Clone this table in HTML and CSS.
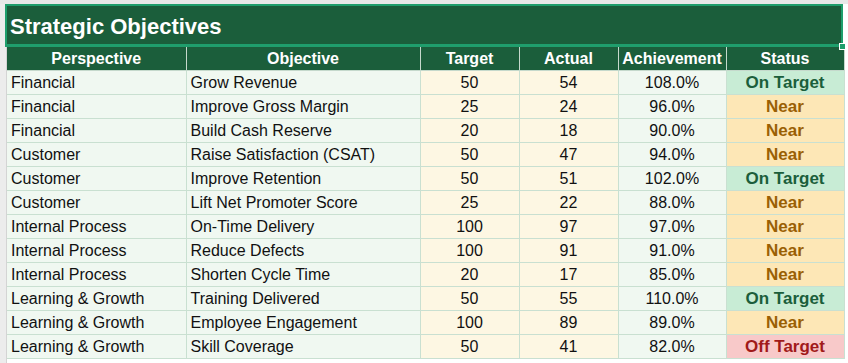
FILE: index.html
```html
<!DOCTYPE html>
<html>
<head>
<meta charset="utf-8">
<link rel="stylesheet" href="styles.css">
</head>
<body>
<div class="topbar"></div>
<div class="sheet">
  <div class="gutter"></div>
  <div class="grid">
    <div class="title">Strategic Objectives</div>
    <table class="tbl">
      <colgroup>
        <col class="c1"><col class="c2"><col class="c3"><col class="c4"><col class="c5"><col class="c6">
      </colgroup>
      <thead>
        <tr><th>Perspective</th><th>Objective</th><th>Target</th><th>Actual</th><th>Achievement</th><th>Status</th></tr>
      </thead>
      <tbody>
        <tr><td class="txt">Financial</td><td class="txt">Grow Revenue</td><td class="num">50</td><td class="num">54</td><td class="pct">108.0%</td><td class="st on">On Target</td></tr>
        <tr><td class="txt">Financial</td><td class="txt">Improve Gross Margin</td><td class="num">25</td><td class="num">24</td><td class="pct">96.0%</td><td class="st near">Near</td></tr>
        <tr><td class="txt">Financial</td><td class="txt">Build Cash Reserve</td><td class="num">20</td><td class="num">18</td><td class="pct">90.0%</td><td class="st near">Near</td></tr>
        <tr><td class="txt">Customer</td><td class="txt">Raise Satisfaction (CSAT)</td><td class="num">50</td><td class="num">47</td><td class="pct">94.0%</td><td class="st near">Near</td></tr>
        <tr><td class="txt">Customer</td><td class="txt">Improve Retention</td><td class="num">50</td><td class="num">51</td><td class="pct">102.0%</td><td class="st on">On Target</td></tr>
        <tr><td class="txt">Customer</td><td class="txt">Lift Net Promoter Score</td><td class="num">25</td><td class="num">22</td><td class="pct">88.0%</td><td class="st near">Near</td></tr>
        <tr><td class="txt">Internal Process</td><td class="txt">On-Time Delivery</td><td class="num">100</td><td class="num">97</td><td class="pct">97.0%</td><td class="st near">Near</td></tr>
        <tr><td class="txt">Internal Process</td><td class="txt">Reduce Defects</td><td class="num">100</td><td class="num">91</td><td class="pct">91.0%</td><td class="st near">Near</td></tr>
        <tr><td class="txt">Internal Process</td><td class="txt">Shorten Cycle Time</td><td class="num">20</td><td class="num">17</td><td class="pct">85.0%</td><td class="st near">Near</td></tr>
        <tr><td class="txt">Learning &amp; Growth</td><td class="txt">Training Delivered</td><td class="num">50</td><td class="num">55</td><td class="pct">110.0%</td><td class="st on">On Target</td></tr>
        <tr><td class="txt">Learning &amp; Growth</td><td class="txt">Employee Engagement</td><td class="num">100</td><td class="num">89</td><td class="pct">89.0%</td><td class="st near">Near</td></tr>
        <tr><td class="txt">Learning &amp; Growth</td><td class="txt">Skill Coverage</td><td class="num">50</td><td class="num">41</td><td class="pct">82.0%</td><td class="st off">Off Target</td></tr>
      </tbody>
    </table>
    <div class="selection"><span class="handle"></span></div>
  </div>
</div>
</body>
</html>
```

FILE: styles.css
```css
html, body {
  margin: 0;
  padding: 0;
  background: #ffffff;
  font-family: "Liberation Sans", Arial, sans-serif;
  overflow: hidden;
}

.topbar {
  height: 4px;
  background: #e8e8e8;
}

.sheet {
  display: flex;
  height: 359px;
}

.gutter {
  width: 6px;
  background: #ececec;
  border-right: 1px solid #d4d4d4;
  flex: none;
}

.grid {
  position: relative;
  width: 836px;
  flex: none;
}

.title {
  height: 42px;
  box-sizing: border-box;
  background: #1b5e3b;
  color: #ffffff;
  font-weight: bold;
  font-size: 22px;
  line-height: 22px;
  padding: 12px 0 0 3px;
}

.selection {
  position: absolute;
  left: -2px;
  top: 0;
  width: 838px;
  height: 43px;
  box-sizing: border-box;
  border: 2px solid #1f9e6c;
  border-bottom-width: 3px;
}

.handle {
  position: absolute;
  right: -5px;
  bottom: -6px;
  width: 5px;
  height: 5px;
  background: #1f9e6c;
  border: 1px solid #ffffff;
}

.tbl {
  border-collapse: collapse;
  table-layout: fixed;
  width: 837px;
  margin-top: 1px;
  font-size: 16px;
}

.c1 { width: 179px; }
.c2 { width: 234px; }
.c3 { width: 99px; }
.c4 { width: 99px; }
.c5 { width: 108px; }
.c6 { width: 118px; }

.tbl th {
  height: 22px;
  padding: 1px 0 0;
  background: #1b5e3b;
  color: #ffffff;
  font-weight: bold;
  font-size: 16px;
  text-align: center;
  border-left: 1px solid #c5d9cc;
  border-right: 1px solid #c5d9cc;
  border-bottom: 1px solid #c5d9cc;
}

.tbl th:first-child { border-left: none; }

.tbl td {
  height: 22px;
  padding: 1px 4px 0;
  color: #111111;
  border: 1px solid #c9e0d1;
  white-space: nowrap;
  overflow: hidden;
}

.tbl td:first-child { border-left: none; }

.txt { background: #f0f8f1; }
.num { background: #fdf7e3; text-align: center; }
.pct { background: #f0f8f1; text-align: center; }

.st {
  text-align: center;
  font-weight: bold;
  font-size: 17px;
}
.on { background: #c8ecd5; color: #1b5e3b !important; }
.near { background: #fde7b6; color: #9a6004 !important; }
.off { background: #f8c9c9; color: #a11a1a !important; }
```
